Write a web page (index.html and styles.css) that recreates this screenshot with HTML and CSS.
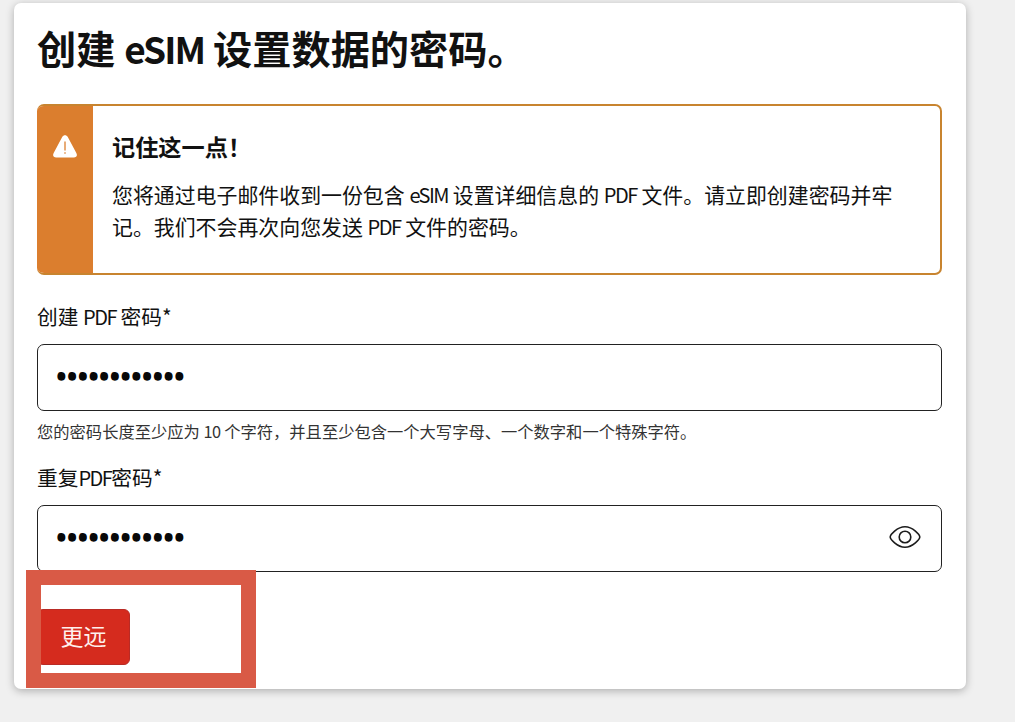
FILE: index.html
```html
<!DOCTYPE html>
<html lang="zh-CN">
<head>
<meta charset="utf-8">
<title>eSIM</title>
<link rel="stylesheet" href="styles.css">
</head>
<body>
<main class="card">
  <h1 class="title">创建 <span class="latin-title">eSIM</span> 设置数据的密码。</h1>
  <section class="notice">
    <div class="notice-side">
      <svg class="warning" viewBox="0 0 24 23" width="24" height="23"><path d="M9.2 1.9C10.5-.4 13.5-.4 14.8 1.9L23.2 17.7C24.8 20.6 23.5 22.5 20.8 22.5H3.2C.5 22.5-.8 20.6.8 17.7Z" fill="#fff"/><path d="M12 6.5V15.5M12 17.2V18.8" stroke="#db7e2e" stroke-width="1.3"/></svg>
    </div>
    <div class="notice-body">
      <h2 class="notice-title">记住这一点！</h2>
      <p class="notice-text">您将通过电子邮件收到一份包含 <span class="latin">eSIM</span> 设置详细信息的 <span class="latin">PDF</span> 文件。请立即创建密码并牢<br>记。我们不会再次向您发送 <span class="latin">PDF</span> 文件的密码。</p>
    </div>
  </section>
  <form class="form">
    <label class="label" for="pw">创建 <span class="latin">PDF</span> 密码*</label>
    <div class="field"><input class="input" id="pw" type="password" value="abcdefghijkl"></div>
    <p class="hint">您的密码长度至少应为 <span class="num">10</span> 个字符，并且至少包含一个大写字母、一个数字和一个特殊字符。</p>
    <label class="label" for="pw2">重复<span class="latin">PDF</span>密码*</label>
    <div class="field"><input class="input" id="pw2" type="password" value="abcdefghijkl">
      <svg class="eye" viewBox="0 0 32 24" width="32" height="24" fill="none" stroke="#1c1c1c" stroke-width="1.6"><path d="M1.2 12C1.2 10 8 1.8 16 1.8S30.8 10 30.8 12 24 22.2 16 22.2 1.2 14 1.2 12Z"/><circle cx="16" cy="12" r="5.8"/></svg>
    </div>
    <div class="actions"><button class="submit" type="button">更远</button><div class="highlight"></div></div>
  </form>
</main>
</body>
</html>
```
FILE: styles.css
```css
* { box-sizing: border-box; }
body {
  margin: 0;
  padding: 3px 49px 0 14px;
  height: 722px;
  overflow: hidden;
  background: #f0f0f0;
  color: #111;
  font-family: "Noto Sans CJK SC", sans-serif;
}
.card {
  height: 686px;
  padding: 17px 24px 0 23px;
  border-radius: 7px;
  background: #fff;
  box-shadow: 0 2px 8px rgba(0, 0, 0, .28);
}
h1, h2, p { margin: 0; }
.title {
  height: 84px;
  font-size: 39.2px;
  line-height: 54px;
  font-weight: 700;
  white-space: nowrap;
}
.latin-title { font-size: 37px; letter-spacing: -1.9px; }
.latin { font-size: 20px; letter-spacing: -1.5px; }
.num { letter-spacing: -.5px; }
.notice {
  display: flex;
  height: 171px;
  border: 2px solid #c8842f;
  border-left: 0;
  border-radius: 7px;
  overflow: hidden;
}
.notice-side {
  flex: 0 0 56px;
  margin: -2px 0;
  padding: 31px 0 0 16px;
  background: #db7e2e;
}
.warning { display: block; }
.notice-body { padding: 23px 0 0 19px; }
.notice-title { height: 50px; font-size: 23.2px; line-height: 34px; font-weight: 700; }
.notice-text { font-size: 20.92px; line-height: 31.5px; white-space: nowrap; }
.form { display: flex; flex-direction: column; padding-top: 26px; }
.label { height: 43px; font-size: 20.7px; line-height: 30px; white-space: nowrap; }
.field {
  display: flex;
  align-items: center;
  height: 67px;
  padding: 0 20px 0 18px;
  border: 1px solid #222;
  border-radius: 7px;
}
.input {
  flex: 1;
  min-width: 0;
  height: 60px;
  padding: 0 0 4px;
  border: 0;
  outline: 0;
  background: none;
  color: #080808;
  font: 28.5px "Noto Sans", sans-serif;
  -webkit-text-stroke: 1.6px #080808;
}
.hint { height: 51px; padding-top: 8px; color: #333; font-size: 16.3px; line-height: 24px; white-space: nowrap; }
.eye { flex: none; margin-bottom: 3px; }
.actions { position: relative; padding-top: 37px; }
.submit {
  display: block;
  width: 93px;
  height: 56px;
  padding: 0 0 4px;
  border: 1px solid #b92b25;
  border-radius: 6px;
  background: #d52b1e;
  color: #fff0ed;
  font: 23px "Noto Sans CJK SC", sans-serif;
}
.highlight {
  position: absolute;
  left: -11px;
  top: -2px;
  width: 230px;
  height: 118px;
  border: 15px solid #d95a46;
}
```
